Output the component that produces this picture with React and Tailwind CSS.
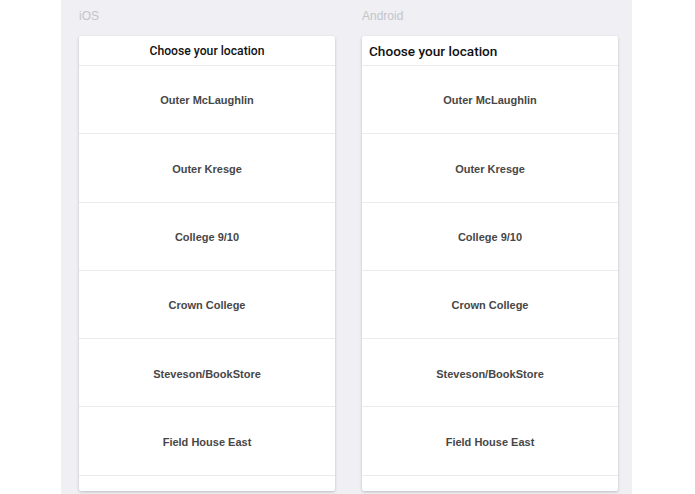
import React from 'react';

const locations = [
  'Outer McLaughlin',
  'Outer Kresge',
  'College 9/10',
  'Crown College',
  'Steveson/BookStore',
  'Field House East',
];

function LocationCard({ variant }) {
  const isIOS = variant === 'ios';
  return (
    <div className="w-[256px] h-[455px] bg-white rounded-[2px] shadow-[0_1px_3px_rgba(0,0,0,0.22)] overflow-hidden flex flex-col">
      <div
        className={`h-[30px] shrink-0 flex items-center border-b border-[#ebebeb] text-[#111] font-['Roboto',Arial,sans-serif] ${
          isIOS ? 'justify-center text-[12.2px] font-medium pt-[1px]' : 'justify-start pl-[7px] text-[13.6px] font-medium pt-[1px]'
        }`}
      >
        Choose your location
      </div>
      {locations.map((name) => (
        <div
          key={name}
          className="h-[68.3px] shrink-0 flex items-center justify-center border-b border-[#ebebeb] text-[11px] font-bold text-[#474747] pt-[2px]"
        >
          {name}
        </div>
      ))}
      <div className="flex-1" />
    </div>
  );
}

export default function App() {
  return (
    <div className="w-[695px] h-[494px] bg-white font-['Liberation_Sans',Arial,sans-serif] overflow-hidden">
      <div className="ml-[61px] w-[571px] h-full bg-[#efeff4] flex gap-[27px] pl-[18px]">
        <div className="flex flex-col">
          <div className="h-[36px] pt-[7px] text-[12px] text-[#c4c4c8] font-light">iOS</div>
          <LocationCard variant="ios" />
        </div>
        <div className="flex flex-col">
          <div className="h-[36px] pt-[7px] text-[12px] text-[#c4c4c8] font-light">Android</div>
          <LocationCard variant="android" />
        </div>
      </div>
    </div>
  );
}
